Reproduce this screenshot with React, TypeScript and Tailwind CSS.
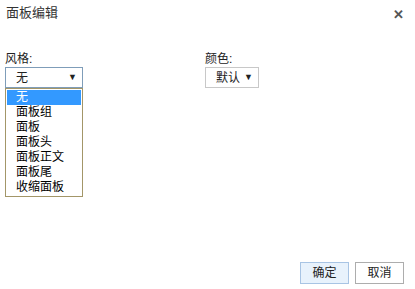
import React from 'react';

const styles = ['无', '面板组', '面板', '面板头', '面板正文', '面板尾', '收缩面板'];

const font = { fontFamily: '"Liberation Sans", "Noto Sans CJK SC", sans-serif' };

export default function App() {
  return (
    <div className="w-[415px] h-[289px] bg-white flex flex-col text-[#222]" style={font}>
      <div className="flex items-center justify-between pl-[6px] pr-[11px] pt-[4px] h-[22px]">
        <span className="text-[13px] text-[#333]">面板编辑</span>
        <span className="text-[13px] font-bold text-[#555] leading-none mt-[2px]">✕</span>
      </div>

      <div className="flex pt-[30px] pl-[5px] flex-1">
        <div className="w-[200px] flex flex-col">
          <span className="text-[12px] leading-[14px] mb-[1px]">风格:</span>
          <div className="relative w-[78px]">
            <div className="h-[21px] border border-[#7f9db9] flex items-center justify-between pl-[10px] pr-[5px] text-[12px]">
              <span>无</span>
              <span className="text-[9px]">▼</span>
            </div>
            <div className="absolute left-0 top-[21px] w-[78px] border border-[#a39668] bg-white p-[1px] flex flex-col">
              {styles.map((s, i) => (
                <div
                  key={s}
                  className={
                    'h-[15px] leading-[15px] pl-[9px] text-[12px] ' +
                    (i === 0 ? 'bg-[#3399ff] text-white' : 'text-black')
                  }
                >
                  {s}
                </div>
              ))}
            </div>
          </div>
        </div>

        <div className="flex flex-col">
          <span className="text-[12px] leading-[14px] mb-[1px]">颜色:</span>
          <div className="h-[21px] w-[54px] border border-[#c8c8c8] flex items-center justify-between pl-[10px] pr-[5px] text-[12px]">
            <span>默认</span>
            <span className="text-[9px]">▼</span>
          </div>
        </div>
      </div>

      <div className="flex justify-end gap-[6px] pr-[11px] pb-[5px]">
        <button className="w-[49px] h-[22px] border border-[#a8c4e4] bg-[#e8f2fc] text-[12px]">确定</button>
        <button className="w-[49px] h-[22px] border border-[#adadad] bg-white text-[12px]">取消</button>
      </div>
    </div>
  );
}
